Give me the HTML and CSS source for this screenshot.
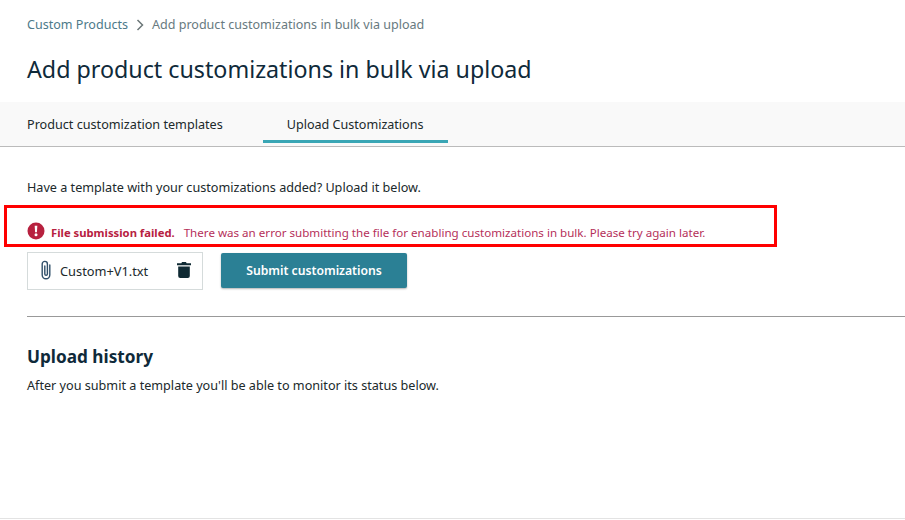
FILE: index.html
```html
<!DOCTYPE html>
<html lang="en">
<head>
  <meta charset="UTF-8" />
  <title>Add product customizations in bulk via upload</title>
  <link rel="stylesheet" href="styles.css">
</head>
<body>
  <div class="breadcrumb">
    <a href="#">Custom Products</a>
    <svg class="crumb-arrow" width="8" height="12" viewBox="0 0 8 12"><path d="M1.5 1l5 5-5 5" fill="none" stroke="#6c7778" stroke-width="1.5"/></svg>
    <span>Add product customizations in bulk via upload</span>
  </div>
  <h1>Add product customizations in bulk via upload</h1>

  <div class="tabs">
    <div class="tab">Product customization templates</div>
    <div class="tab active">Upload Customizations</div>
  </div>

  <div class="content">
    <p class="intro">Have a template with your customizations added? Upload it below.</p>

    <!-- red box around the alert -->
    <div class="alert">
      <div class="highlight"></div>
      <svg class="alert-icon" width="18" height="18" viewBox="0 0 18 18">
        <circle cx="9" cy="9" r="8.5" fill="#b7213f"/>
        <path d="M7.7 3.8h2.6l-.4 6.4H8.1z" fill="#fff"/>
        <circle cx="9" cy="12.8" r="1.5" fill="#fff"/>
      </svg>
      <strong>File submission failed.</strong>
      <span>There was an error submitting the file for enabling customizations in bulk. Please try again later.</span>
    </div>

    <div class="upload-row">
      <div class="file-box">
        <svg class="clip" width="12" height="20" viewBox="0 0 12 20"><path d="M9.8 5v10a3.8 3.8 0 0 1-7.6 0V4a2.6 2.6 0 0 1 5.2 0v10a1.3 1.3 0 0 1-2.6 0V6" fill="none" stroke="#31506b" stroke-width="1.4" stroke-linecap="round"/></svg>
        <span class="file-name">Custom+V1.txt</span>
        <svg class="trash" width="14" height="16" viewBox="0 0 14 16"><path d="M5 0h4l.6 1.2H14v2H0v-2h4.4zM1.2 4.4h11.6V14a2 2 0 0 1-2 2H3.2a2 2 0 0 1-2-2z" fill="#0f2a33"/></svg>
      </div>
      <button class="submit">Submit customizations</button>
    </div>

    <hr class="divider">

    <h2>Upload history</h2>
    <p class="history-note">After you submit a template you'll be able to monitor its status below.</p>
  </div>

  <div class="footer-line"></div>
</body>
</html>
```

FILE: styles.css
```css
:root {
  --heading: #0f2a3a;
  --teal: #2b8095;
  --tab-line: #3aa6b5;
  --error: #b7213f;
}
body {
  margin: 0;
  height: 520px;
  overflow: hidden;
  position: relative;
  font-family: "Noto Sans", sans-serif;
  font-size: 12.63px;
  color: #20292b;
  background-color: #fff;
}
/* breadcrumb */
.breadcrumb {
  display: flex;
  align-items: center;
  gap: 8px;
  padding: 16px 27px 0;
  height: 18px;
  line-height: 18px;
  font-size: 12.55px;
  color: #687a80;
}
.breadcrumb a {
  color: #4d7a8a;
  text-decoration: none;
}
h1 {
  margin: 18px 0 0 27px;
  height: 34px;
  line-height: 34px;
  font-size: 23.25px;
  font-weight: 400;
  color: var(--heading);
}
/* tabs */
.tabs {
  display: flex;
  margin-top: 16px;
  height: 44px;
  padding-left: 27px;
  background-color: #f9f9f9;
  border-bottom: 1px solid #bbb;
}
.tab {
  line-height: 44px;
  color: #20292b;
}
.tab.active {
  margin-left: 40px;
  padding: 0 24px;
  height: 38px;
  line-height: 46px;
  font-size: 12.57px;
  border-bottom: 3px solid var(--tab-line);
}
/* main */
.content {
  padding-left: 27px;
}
.intro {
  margin: 31px 0 0;
  line-height: 18px;
}
.alert {
  position: relative;
  display: flex;
  align-items: center;
  margin-top: 27px;
  height: 18px;
  font-size: 11.6px;
  color: var(--error);
}
.alert-icon {
  margin-bottom: 2px;
}
.alert strong {
  margin-left: 6px;
  font-size: 11.25px;
  font-weight: 700;
}
.alert span {
  margin-left: 9px;
  color: #b5305a;
}
.highlight {
  position: absolute;
  left: -23px;
  top: -18px;
  width: 767px;
  height: 36px;
  border: 3px solid #f00;
}
.upload-row {
  display: flex;
  align-items: flex-start;
  gap: 18px;
  margin-top: 11px;
}
.file-box {
  display: flex;
  align-items: center;
  box-sizing: border-box;
  width: 176px;
  height: 38px;
  padding: 0 11px 0 12px;
  border: 1px solid #d5dbdb;
}
.clip {
  margin-bottom: 2px;
}
.trash {
  margin-bottom: 2px;
}
.file-name {
  margin-left: 8px;
  flex: 1;
  font-size: 12.8px;
}
.submit {
  width: 186px;
  height: 35px;
  margin-top: 1px;
  border: none;
  border-radius: 2px;
  background-color: var(--teal);
  color: #fff;
  font-family: inherit;
  font-size: 12.2px;
  font-weight: 600;
  box-shadow: 0 1px 2px rgba(0,0,0,.3);
}
.divider {
  margin: 26px 0 0;
  border: none;
  border-top: 1px solid #999;
}
h2 {
  margin: 30px 0 0;
  line-height: 20px;
  font-size: 17.2px;
  font-weight: 700;
  color: var(--heading);
}
.history-note {
  margin: 9px 0 0;
  line-height: 18px;
}
.footer-line {
  position: absolute;
  left: 0;
  right: 0;
  bottom: 1px;
  border-top: 1px solid #e3e3e3;
}
```
